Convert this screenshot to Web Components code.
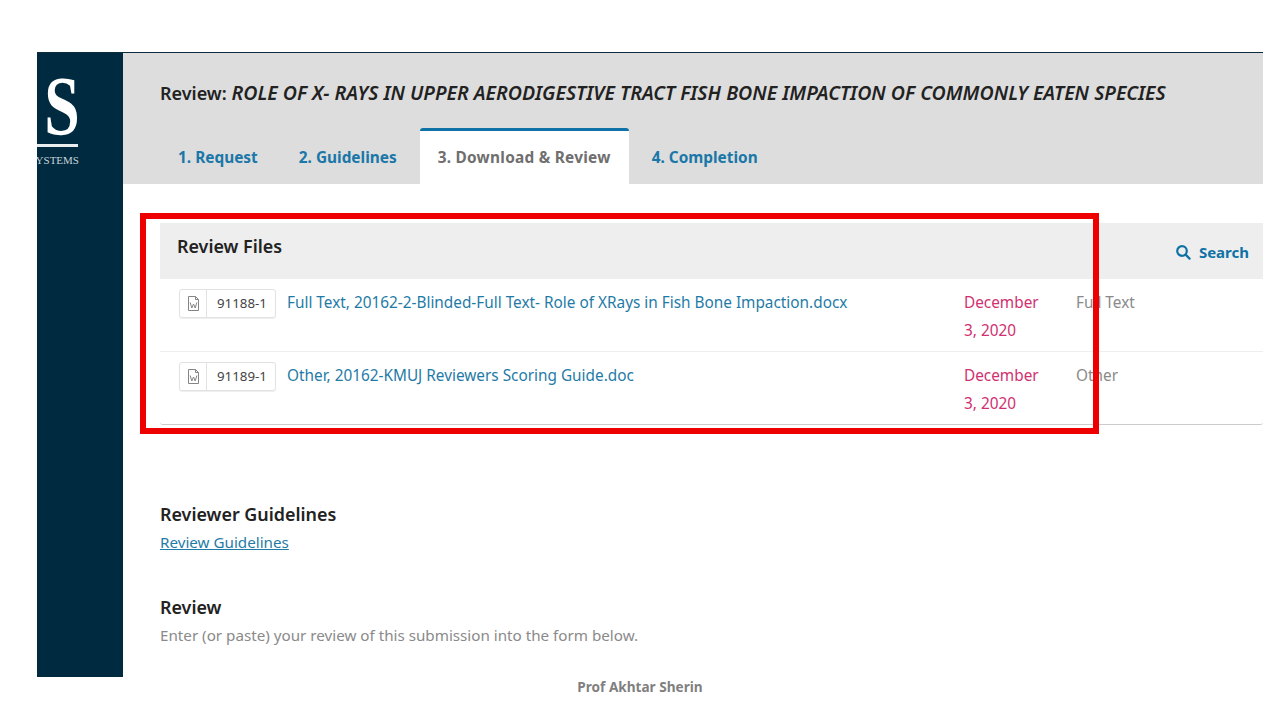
<!DOCTYPE html>
<html><head><meta charset="utf-8">
<style>
html,body{margin:0;padding:0;background:#fff;height:720px;overflow:hidden;font-family:"Noto Sans",sans-serif}
</style></head>
<body>
<slide-page>
<ojs-side slot="side"></ojs-side>
<review-head slot="main" title-text="ROLE OF X- RAYS IN UPPER AERODIGESTIVE TRACT FISH BONE IMPACTION OF COMMONLY EATEN SPECIES"></review-head>
<files-panel slot="main">
<file-row num="91188-1" name="Full Text, 20162-2-Blinded-Full Text- Role of XRays in Fish Bone Impaction.docx" kind="Full Text"></file-row>
<file-row num="91189-1" name="Other, 20162-KMUJ Reviewers Scoring Guide.doc" kind="Other"></file-row>
</files-panel>
<review-section slot="main"></review-section>
</slide-page>
<script>
function def(name,html,init){
  customElements.define(name,class extends HTMLElement{
    constructor(){super();const r=this.attachShadow({mode:'open'});r.innerHTML=html;}
    connectedCallback(){if(init)init.call(this,this.shadowRoot);}
  });
}
def('slide-page',`<style>
:host{display:block;position:relative;width:1280px;height:720px}
.frame{position:absolute;left:37px;top:52px;width:1226px;height:625px;display:flex;overflow:hidden;border-top:1px solid #0d2c3d;box-sizing:border-box}
.side{flex:0 0 86px}
.main{flex:1;min-width:0;display:flex;flex-direction:column}
.foot{position:absolute;left:0;right:0;top:678px;text-align:center;font:700 13.6px/18px "Noto Sans",sans-serif;color:#7f7f7f}
.mark{position:absolute;left:140px;top:213px;width:959px;height:221px;border:6px solid #ee0000;box-sizing:border-box}
</style>
<div class="frame"><div class="side"><slot name="side"></slot></div><div class="main"><slot name="main"></slot></div></div>
<div class="foot">Prof Akhtar Sherin</div>
<div class="mark"></div>`);
def('ojs-side',`<style>
:host{display:block;height:100%;background:#002a3f;color:#fff;position:relative;overflow:hidden}
.s{position:absolute;right:43px;top:12px;font:700 84px/84px "Liberation Serif",serif;color:#fff;transform:scaleX(.76);transform-origin:right}
.rule{position:absolute;left:0;top:91px;width:41px;height:3px;background:#e8eef0}
.sys{position:absolute;right:44px;top:100px;font:400 11px/14px "Liberation Serif",serif;color:#c9d4da;white-space:nowrap}
</style><div class="s">S</div><div class="rule"></div><div class="sys">SYSTEMS</div>`);
def('review-head',`<style>
:host{display:block;background:#ddd;height:131px;padding:0 0 0 37px;box-sizing:border-box;display:flex;flex-direction:column;justify-content:space-between}
h1{margin:0;padding-top:27px;font:600 18px/26px "Noto Sans",sans-serif;color:#222;white-space:nowrap}
i{font-style:italic;font-size:19.55px}
nav{display:flex}
a{display:block;font:700 15.4px/20px "Noto Sans",sans-serif;color:#1a77a8;padding:17px 18px 16px;height:53px;box-sizing:border-box;margin-right:5px;white-space:nowrap}
a.on{background:#fff;color:#6f6f6f;border-top:3px solid #0f72a6;border-radius:3px 3px 0 0;padding-top:17px;height:56px;margin-top:-3px;letter-spacing:.25px}
</style><h1>Review: <i id="t"></i></h1><nav><a>1. Request</a><a>2. Guidelines</a><a class="on">3. Download &amp; Review</a><a>4. Completion</a></nav>`,
function(r){r.getElementById('t').textContent=this.getAttribute('title-text');});
def('files-panel',`<style>
:host{display:block;margin:39px 0 0 37px;border-bottom:1px solid #ccc;border-radius:0 0 3px 3px}
header{background:#eee;height:56px;position:relative;display:flex;justify-content:space-between}
h2{margin:0;padding:10.5px 0 0 17px;font:600 17.9px/24px "Noto Sans",sans-serif;color:#222}
.search{display:flex;align-items:center;gap:8px;padding:17px 14px 0 0;height:24px;font:700 15px/20px "Noto Sans",sans-serif;color:#0f72a6}
svg{display:block}
</style><header><h2>Review Files</h2><div class="search"><svg width="16" height="16" viewBox="0 0 16 16" fill="none" stroke="#0f72a6" stroke-width="2.2"><circle cx="7" cy="7" r="4.8"/><path d="M10.6 10.6 14.6 14.6" stroke-linecap="round"/></svg>Search</div></header><slot></slot>`);
def('file-row',`<style>
:host{display:flex;height:73px;box-sizing:border-box;border-bottom:1px solid #eee;padding:10px 0 0 19px;font:400 15.35px/28px "Noto Sans",sans-serif}
:host(:last-child){border-bottom:0;height:72px}
.badge{flex:0 0 auto;display:flex;height:29px;width:97px;box-sizing:border-box;border:1px solid #e2e2e2;border-radius:3px;box-shadow:0 1px 1px #eee;font-size:13.3px;line-height:27px;color:#444}
.ic{flex:0 0 27px;display:flex;align-items:center;justify-content:center;border-right:1px solid #e2e2e2;box-sizing:border-box}
.n{padding:0 0 0 10px}
.name{flex:0 0 688px;width:688px;padding-left:11px;margin-top:-1px;box-sizing:border-box;color:#1f7ba6;white-space:nowrap}
.date{flex:0 0 112px;width:112px;color:#d0306f;margin-top:-1px}
.date span{display:block}
.kind{color:#8a8a8a;margin-top:-1px}
</style><div class="badge"><div class="ic"><svg width="13" height="15" viewBox="0 0 13 15" fill="none" stroke="#858585"><path d="M1.5.5H8.5L11.5 3.5V14.5H1.5Z"/><path d="M8.5.5V3.5H11.5"/><path d="M3.2 6.5 4.8 12 6.5 8 8.2 12 9.8 6.5" stroke-width="1"/></svg></div><div class="n" id="n"></div></div><div class="name" id="f"></div><div class="date"><span>December</span><span>3, 2020</span></div><div class="kind" id="k"></div>`,
function(r){r.getElementById('n').textContent=this.getAttribute('num');r.getElementById('f').textContent=this.getAttribute('name');r.getElementById('k').textContent=this.getAttribute('kind');});
def('review-section',`<style>
:host{display:block;padding:77px 0 0 37px;font:400 15.2px/20px "Noto Sans",sans-serif}
h3{margin:0;font:600 17.9px/24px "Noto Sans",sans-serif;color:#222}
a{display:block;color:#1f7ba6;text-decoration:underline;line-height:22px;margin-top:5px}
h3.b{margin-top:42px}
p{margin:5px 0 0;color:#8a8a8a;line-height:22px}
</style><h3>Reviewer Guidelines</h3><a>Review Guidelines</a><h3 class="b">Review</h3><p>Enter (or paste) your review of this submission into the form below.</p>`);
</script>
</body></html>
